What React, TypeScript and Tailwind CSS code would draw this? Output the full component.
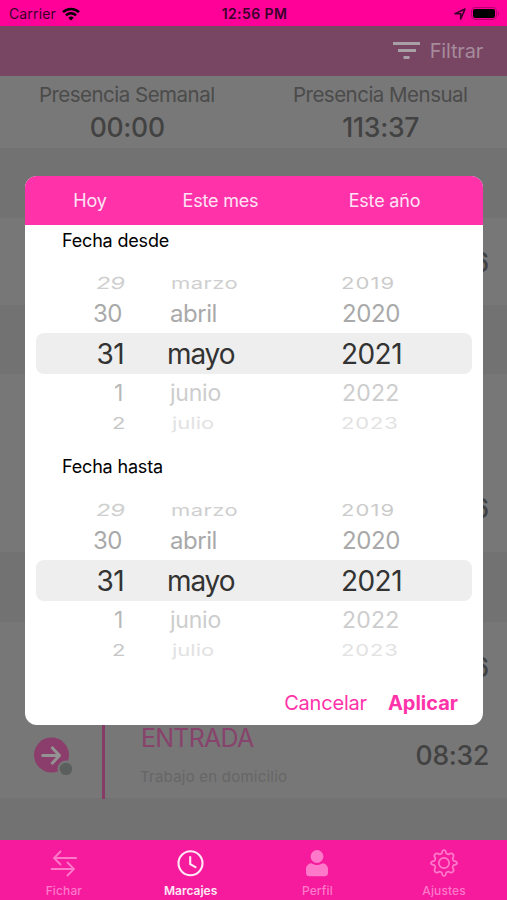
import React from "react";
import clsx from "clsx";

// Wheel rows from top to bottom; the outer ones are squashed like on a drum
const wheelRows = [
  {
    day: "29",
    month: "marzo",
    year: "2019",
    row: "h-[22px] translate-y-px text-[22px]",
    dayClass: "text-[#cfcfcf] -skew-x-6 scale-x-110 scale-y-[0.75] origin-right",
    monthClass: "text-[#cfcfcf] pl-1 tracking-[0.02em] scale-y-[0.75]",
    yearClass: "text-[#cbcbcb] tracking-[0.05em] scale-y-[0.75]",
  },
  {
    day: "30",
    month: "abril",
    year: "2020",
    row: "h-[40px] translate-y-px text-[24px]",
    dayClass: "text-[#a9a9a9] pr-[3px]",
    monthClass: "text-[#a9a9a9] pl-[3px] tracking-[-0.02em]",
    yearClass: "text-[#a9a9a9] pl-px tracking-[-0.015em]",
  },
  {
    day: "31",
    month: "mayo",
    year: "2021",
    row: "h-[40px] translate-y-px text-[28px]",
    dayClass: "text-[#333333] pr-[1px]",
    monthClass: "text-[#333333] tracking-[-0.04em]",
    yearClass: "text-[#333333] tracking-[-0.02em]",
  },
  {
    day: "1",
    month: "junio",
    year: "2022",
    row: "h-[38px] translate-y-px text-[23px]",
    dayClass: "text-[#b8b8b8] pr-[2px] scale-y-[0.97]",
    monthClass: "text-[#cdcdcd] pl-[3px] tracking-[-0.01em] scale-y-[0.97]",
    yearClass: "text-[#cdcdcd] pl-px tracking-[0.01em] scale-y-[0.97]",
  },
  {
    day: "2",
    month: "julio",
    year: "2023",
    row: "h-[24px] text-[22px]",
    dayClass: "text-[#c6c6c6] scale-y-[0.75]",
    monthClass: "text-[#e2e2e2] pl-[5px] scale-y-[0.75]",
    yearClass: "text-[#e2e2e2] tracking-[0.04em] scale-y-[0.75]",
  },
];

const Wheel = () => (
  <div className="relative mx-[11px] h-[164px]">
    <div className="absolute inset-x-0 top-[62px] h-[41px] rounded-lg bg-[#eeeeee]" />
    <div className="relative">
      {wheelRows.map((r) => (
        <div key={r.day} className={clsx("grid grid-cols-[89px_42px_174px_1fr] items-center leading-none", r.row)}>
          <span className={clsx("text-right tracking-[-0.02em]", r.dayClass)}>{r.day}</span>
          <span className={clsx("col-start-3", r.monthClass)}>{r.month}</span>
          <span className={r.yearClass}>{r.year}</span>
        </div>
      ))}
    </div>
  </div>
);

const StatusBar = () => (
  <div className="grid h-[26px] grid-cols-3 items-center bg-[#ff0099] pl-[9px] pr-[7px] pt-px text-[14px] text-[#39002a]">
    <div className="flex items-center gap-1.5">
      <span className="tracking-[0.01em]">Carrier</span>
      <svg viewBox="0 0 18 14" className="h-[14px] w-[18px] fill-none stroke-black" strokeWidth="2.5">
        <path d="M1 5.2a11.5 11.5 0 0 1 16 0M4 8.3a7.2 7.2 0 0 1 10 0" />
        <path d="M9 13.5 6.3 10.8a3.8 3.8 0 0 1 5.4 0Z" className="fill-black stroke-none" />
      </svg>
    </div>
    <span className="text-center font-semibold tracking-[0.03em]">12:56 PM</span>
    <div className="flex items-center justify-end gap-[5px]">
      <svg viewBox="0 0 12 12" className="size-3 fill-none stroke-[#39002a]" strokeWidth="1.6" strokeLinejoin="round">
        <path d="M1 5.800 11 1 6.700 11V5.800Z" />
      </svg>
      <svg viewBox="0 0 29 13" className="h-[13px] w-[29px]">
        <rect x="0.5" y="0.5" width="25" height="12" rx="3.5" fill="none" stroke="#b8006f" />
        <rect x="2" y="2" width="22" height="9" rx="2" fill="black" />
        <path d="M27 4.500v4a2.200 2.200 0 0 0 0-4" fill="#b8006f" />
      </svg>
    </div>
  </div>
);

const Stat = ({ label, value }: { label: string; value: string }) => (
  <div className="flex flex-1 flex-col items-center pt-[7px]">
    <span className="text-[20.5px] leading-6 tracking-[-0.025em] text-[#4b4b4b]">{label}</span>
    <span className="mt-[5px] pl-px text-[26.5px] font-medium leading-[30px] tracking-[-0.01em] text-[#424242]">{value}</span>
  </div>
);

const Band = ({ className }: { className: string }) => <div className={clsx("bg-[#727272]", className)} />;

const Row = ({ time, children, className }: { time?: string; children?: React.ReactNode; className?: string }) => (
  <div className={clsx("flex items-center justify-between pr-[18px]", className)}>
    <div className="flex h-full items-center">{children}</div>
    <span className="pt-[3px] text-[26.5px] font-medium tracking-[-0.01em] text-[#424242]">{time}</span>
  </div>
);

const Entry = () => (
  <>
    <div className="flex h-full w-[102px] items-center pl-[33px] pt-[2px]">
      <svg viewBox="0 0 40 40" className="size-10">
        <circle cx="18.500" cy="20" r="17.500" fill="#8b3e6c" />
        <path d="M8.500 20.500h17.500M18.500 12l8 8.500-8 8.500" fill="none" stroke="#939393" strokeWidth="3" strokeLinejoin="round" />
        <circle cx="33" cy="34" r="8.500" fill="#777777" />
        <circle cx="33" cy="34" r="6.200" fill="#5b605e" />
      </svg>
    </div>
    <div className="h-full w-[3px] translate-y-px bg-[#853d68]" />
    <div className="flex flex-col pl-[35px] pt-px">
      <span className="pl-px text-[25px] leading-[30px] tracking-[-0.03em] text-[#87436b]">ENTRADA</span>
      <span className="mt-[14px] text-[15px] leading-5 tracking-[0.015em] text-[#666666]">Trabajo en domicilio</span>
    </div>
  </>
);

const tabs = [
  {
    label: "Fichar",
    icon: (
      <svg viewBox="0 0 28 28" className="size-7 fill-none stroke-current" strokeWidth="1.8" strokeLinecap="round">
        <path d="M27.200 9H5M11.500 2.500 5 9l6.500 6.500M2.500 20H25M18.500 13.500 25 20l-6.500 6.500" />
      </svg>
    ),
  },
  {
    label: "Marcajes",
    active: true,
    icon: (
      <svg viewBox="0 0 28 28" className="size-7 fill-none stroke-current" strokeWidth="2.1" strokeLinecap="round">
        <circle cx="14.500" cy="14.300" r="12" />
        <path d="M14.200 8v7.200l5.300 3" />
      </svg>
    ),
  },
  {
    label: "Perfil",
    icon: (
      <svg viewBox="0 0 28 28" className="size-7 fill-current">
        <circle cx="14" cy="7.500" r="6.400" />
        <path d="M8.500 14.300c3.700 2.400 7.300 2.400 11 0 3.400.3 5.500 2.700 5.500 6v3.500q0 3.500-3.500 3.500h-15Q3 27.300 3 23.800v-3.500c0-3.300 2.100-5.700 5.500-6Z" />
      </svg>
    ),
  },
  {
    label: "Ajustes",
    icon: (
      <svg viewBox="0 0 28 28" className="size-7 fill-none stroke-current" strokeWidth="1.7" strokeLinejoin="round">
        <path d="M11.800 4.500Q12.200 1 14 1t2.200 3.500l2.300 1Q21.300 3.300 22.900 5.100T22.500 9.500l1 2.300Q27 12.200 27 14t-3.500 2.200l-1 2.300q2.200 2.800.4 4.400t-4.400-.4l-2.300 1Q15.800 27 14 27t-2.200-3.500l-2.300-1Q6.700 24.700 5.100 22.900T5.500 18.500l-1-2.300Q1 15.800 1 14t3.500-2.200l1-2.300Q3.300 6.700 5.100 5.100T9.500 5.500Z" />
        <circle cx="14" cy="14" r="5.200" />
      </svg>
    ),
  },
];

const TabBar = () => (
  <nav className="grid h-[60px] grid-cols-4 bg-[#f51b9c]">
    {tabs.map((tab) => (
      <div
        key={tab.label}
        className={clsx("flex flex-col items-center pt-[9px]", tab.active ? "text-[#ffe9f7]" : "text-[#ff79cb]")}
      >
        {tab.icon}
        <span className={clsx("mt-[6px] pl-px text-[12px] leading-4", tab.active ? "font-semibold" : "font-medium tracking-[0.01em]")}>
          {tab.label}
        </span>
      </div>
    ))}
  </nav>
);

const FilterDialog = () => (
  <div className="absolute left-[25px] top-[176px] h-[549px] w-[458px] overflow-hidden rounded-xl bg-white">
    <div className="grid h-[49px] grid-cols-[130px_131px_197px] items-center bg-[#ff32a9] text-center text-[18px] tracking-[-0.01em] text-[#ffe3f5]">
      <span>Hoy</span>
      <span>Este mes</span>
      <span>Este año</span>
    </div>
    <div className="pt-[4px]">
      <p className="px-[37px] pt-px text-[18px] leading-[22px] tracking-[-0.01em] text-black">Fecha desde</p>
      <div className="pt-[19px]">
        <Wheel />
      </div>
    </div>
    <div className="pt-[21px]">
      <p className="px-[37px] text-[18px] leading-[22px] tracking-[-0.01em] text-black">Fecha hasta</p>
      <div className="pt-[20px]">
        <Wheel />
      </div>
    </div>
    <div className="mt-[27px] flex justify-end gap-[21px] pr-[25px] text-[20px] leading-7 text-[#ff32a9]">
      <span className="tracking-[-0.01em]">Cancelar</span>
      <span className="font-bold">Aplicar</span>
    </div>
  </div>
);

const App = () => (
  <div className="relative flex h-[900px] w-[507px] flex-col overflow-hidden bg-[#777777] font-['Inter',sans-serif]">
    <StatusBar />
    <header className="flex h-[50px] items-center justify-end gap-[10px] bg-[#784663] pr-6 text-[20px] text-[#a68b9b]">
      <svg viewBox="0 0 27 18" className="h-[18px] w-[27px] fill-[#a8a0a6]">
        <rect width="27" height="3" />
        <rect x="5" y="7" width="18" height="3" />
        <rect x="10.500" y="14" width="6" height="3" />
      </svg>
      <span className="tracking-[-0.01em]">Filtrar</span>
    </header>
    <div className="flex h-[72px] bg-[#787878]">
      <Stat label="Presencia Semanal" value="00:00" />
      <Stat label="Presencia Mensual" value="113:37" />
    </div>
    <main className="flex flex-1 flex-col">
      <Band className="h-[70px]" />
      <Row className="h-[87px]" time="17:06" />
      <Band className="h-[69px]" />
      <Row className="h-[89px]" />
      <Row className="h-[89px]" time="08:36" />
      <Band className="h-[70px]" />
      <Row className="h-[88px]" time="17:36" />
      <Row className="h-[88px]" time="08:32">
        <Entry />
      </Row>
      <Band className="flex-1" />
    </main>
    <TabBar />
    <FilterDialog />
  </div>
);

export default App;
